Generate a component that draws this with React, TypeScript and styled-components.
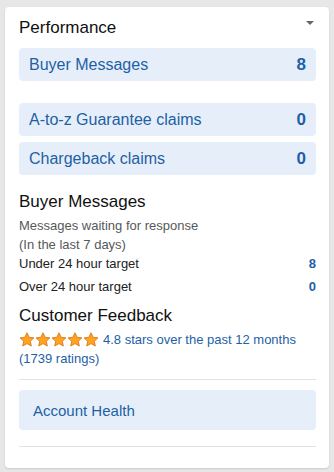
import React from 'react';
import styled, { createGlobalStyle } from 'styled-components';

const GlobalStyle = createGlobalStyle`
  html, body {
    margin: 0;
    padding: 0;
    background: #e7e7e7;
  }
  body {
    font-family: "Liberation Sans", Arial, sans-serif;
    color: #0f1111;
  }
`;

const Page = styled.div`
  padding: 7px 5px 5px 5px;
`;

const Card = styled.section`
  background: #fff;
  border-radius: 4px;
  box-shadow: 0 1px 2px rgba(0, 0, 0, 0.13);
  padding: 11px 13px 21px 14px;
`;

const TitleRow = styled.div`
  display: flex;
  justify-content: space-between;
  align-items: flex-start;
  margin-bottom: 10px;
`;

const Title = styled.h2<{ $top?: number; $bottom?: number }>`
  margin: ${p => p.$top ?? 0}px 0 ${p => p.$bottom ?? 0}px 0;
  font-size: 17px;
  font-weight: 400;
  line-height: 20px;
  color: #0f1111;
`;

const Caret = styled.span`
  width: 0;
  height: 0;
  margin: 3px 2px 0 0;
  border-left: 4px solid transparent;
  border-right: 4px solid transparent;
  border-top: 4px solid #666;
`;

const MetricRow = styled.a<{ $gap?: number }>`
  display: flex;
  justify-content: space-between;
  align-items: center;
  height: 33px;
  margin-top: ${p => p.$gap ?? 0}px;
  padding: 0 10px;
  border-radius: 4px;
  background: #e6eff9;
  color: #1e5fa6;
  font-size: 16px;
  text-decoration: none;
`;

const MetricValue = styled.span`
  font-weight: 700;
  font-size: 17px;
`;

const SubText = styled.div`
  font-size: 13px;
  line-height: 19px;
  color: #565959;
`;

const TargetRow = styled.div<{ $top?: number }>`
  display: flex;
  justify-content: space-between;
  margin-top: ${p => p.$top ?? 0}px;
  font-size: 13px;
  line-height: 19px;
  color: #222;
`;

const Count = styled.span`
  color: #1e5fa6;
  font-weight: 700;
`;

const RatingLine = styled.div`
  display: flex;
  align-items: center;
  gap: 4px;
  font-size: 13px;
  line-height: 19px;
  color: #1e5fa6;
`;

const LinkText = styled.div`
  font-size: 13px;
  line-height: 19px;
  color: #1e5fa6;
`;

const Divider = styled.hr<{ $top: number }>`
  border: 0;
  height: 1px;
  background: #e3e3e3;
  margin: ${p => p.$top}px 0 0 0;
`;

const HealthBox = styled.a`
  display: flex;
  align-items: center;
  height: 40px;
  margin-top: 10px;
  padding: 0 14px;
  border-radius: 4px;
  background: #e6eff9;
  color: #1e5fa6;
  font-size: 15px;
  text-decoration: none;
`;

const Star = () => (
  <svg width="16" height="15" viewBox="0 0 24 23">
    <path
      d="M12 1.2l3.2 6.9 7.4.9-5.5 5.1 1.5 7.4L12 17.8l-6.6 3.7 1.5-7.4L1.4 9l7.4-.9z"
      fill="#ffa41c"
      stroke="#de7921"
      strokeWidth="1.4"
      strokeLinejoin="round"
    />
  </svg>
);

const Stars = styled.span`
  display: inline-flex;
`;

export default function App() {
  return (
    <Page>
      <GlobalStyle />
      <Card>
        <TitleRow>
          <Title>Performance</Title>
          <Caret />
        </TitleRow>
        <MetricRow>
          <span>Buyer Messages</span>
          <MetricValue>8</MetricValue>
        </MetricRow>
        <MetricRow $gap={22}>
          <span>A-to-z Guarantee claims</span>
          <MetricValue>0</MetricValue>
        </MetricRow>
        <MetricRow $gap={6}>
          <span>Chargeback claims</span>
          <MetricValue>0</MetricValue>
        </MetricRow>

        <Title $top={17} $bottom={4}>Buyer Messages</Title>
        <SubText>Messages waiting for response</SubText>
        <SubText>(In the last 7 days)</SubText>
        <TargetRow>
          <span>Under 24 hour target</span>
          <Count>8</Count>
        </TargetRow>
        <TargetRow $top={4}>
          <span>Over 24 hour target</span>
          <Count>0</Count>
        </TargetRow>

        <Title $top={10} $bottom={4}>Customer Feedback</Title>
        <RatingLine>
          <Stars>
            <Star />
            <Star />
            <Star />
            <Star />
            <Star />
          </Stars>
          <span>4.8 stars over the past 12 months</span>
        </RatingLine>
        <LinkText>(1739 ratings)</LinkText>
        <Divider $top={11} />
        <HealthBox>Account Health</HealthBox>
        <Divider $top={16} />
      </Card>
    </Page>
  );
}
